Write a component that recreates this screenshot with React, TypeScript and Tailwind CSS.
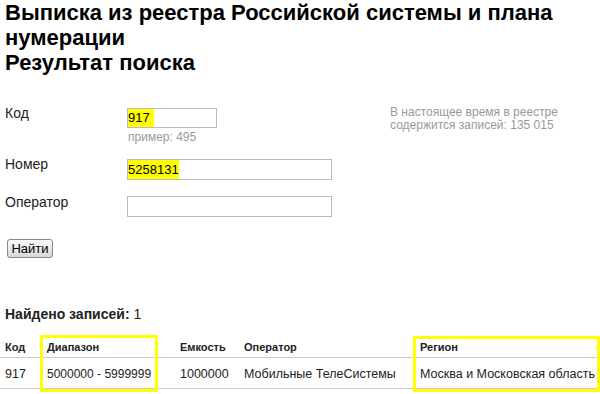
import React from "react";

export default function App() {
  const font = { fontFamily: '"Liberation Sans", Arial, sans-serif' };
  return (
    <div className="w-[600px] h-[394px] bg-white overflow-hidden text-[#222]" style={font}>
      <div className="pl-[5px]">
        <div className="font-bold text-[22px] leading-[25px] text-black">
          Выписка из реестра Российской системы и плана нумерации
        </div>
        <div className="font-bold text-[22px] leading-[25px] text-black">Результат поиска</div>
      </div>

      <div className="mt-[30px] pl-[5px]">
        <div className="flex items-start">
          <div className="w-[122px] text-[14px] leading-[16px]">Код</div>
          <div className="flex flex-col w-[90px] mt-[3px]">
            <div className="w-[90px] h-[20px] border border-[#bbb] bg-white flex items-center">
              <span className="bg-[#ffff00] text-[13px] leading-[18px] pr-[4px] text-black">917</span>
            </div>
            <div className="text-[12px] leading-[14px] text-[#999] mt-[2px] pl-[1px]">пример: 495</div>
          </div>
          <div className="ml-[173px] mt-[1px] text-[12px] leading-[13px] text-[#999]">
            <div>В настоящее время в реестре</div>
            <div>содержится записей: 135 015</div>
          </div>
        </div>

        <div className="flex items-start mt-[12px]">
          <div className="w-[122px] text-[14px] leading-[16px]">Номер</div>
          <div className="w-[205px] h-[21px] mt-[3px] border border-[#bbb] bg-white flex items-center">
            <span className="bg-[#ffff00] text-[13px] leading-[19px] text-black">5258131</span>
          </div>
        </div>

        <div className="flex items-start mt-[14px]">
          <div className="w-[122px] text-[14px] leading-[16px]">Оператор</div>
          <div className="w-[205px] h-[21px] mt-[2px] border border-[#bbb] bg-white"></div>
        </div>

        <div className="pl-[2px] mt-[22px] flex">
          <button className="w-[46px] h-[19px] border border-[#888] rounded-[3px] bg-gradient-to-b from-[#fafafa] to-[#d8d8d8] text-[13px] leading-[15px] text-black">
            Найти
          </button>
        </div>
      </div>

      <div className="pl-[5px] mt-[48px] text-[14px] leading-[16px]">
        <span className="font-bold">Найдено записей:</span> 1
      </div>

      <div className="relative mt-[11px]">
        <div className="grid grid-cols-[42px_133px_64px_176px_1fr] pl-[5px] h-[25px] pt-[8px] text-[11px] leading-[13px] font-bold border-b border-[#ccc]">
          <div>Код</div>
          <div>Диапазон</div>
          <div>Емкость</div>
          <div>Оператор</div>
          <div>Регион</div>
        </div>
        <div className="grid grid-cols-[42px_133px_64px_176px_1fr] pl-[5px] h-[31px] pt-[9px] text-[12.5px] leading-[14px] border-b border-[#ccc]">
          <div>917</div>
          <div className="text-[12px]">5000000 - 5999999</div>
          <div>1000000</div>
          <div>Мобильные ТелеСистемы</div>
          <div className="whitespace-nowrap">Москва и Московская область</div>
        </div>
        <div className="absolute left-[40px] top-[2px] w-[118px] h-[57px] border-[3px] border-[#ffff00]"></div>
        <div className="absolute left-[413px] top-[3px] w-[187px] h-[56px] border-[3px] border-[#ffff00]"></div>
      </div>
    </div>
  );
}
